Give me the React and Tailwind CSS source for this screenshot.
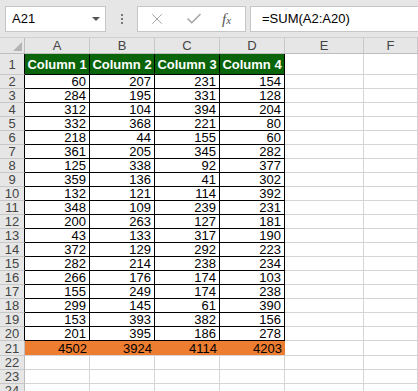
import React from 'react';
import { X, Check } from 'lucide-react';

const data = [
    [60, 207, 231, 154],
    [284, 195, 331, 128],
    [312, 104, 394, 204],
    [332, 368, 221, 80],
    [218, 44, 155, 60],
    [361, 205, 345, 282],
    [125, 338, 92, 377],
    [359, 136, 41, 302],
    [132, 121, 114, 392],
    [348, 109, 239, 231],
    [200, 263, 127, 181],
    [43, 133, 317, 190],
    [372, 129, 292, 223],
    [282, 214, 238, 234],
    [266, 176, 174, 103],
    [155, 249, 174, 238],
    [299, 145, 61, 390],
    [153, 393, 382, 156],
    [201, 395, 186, 278],
];

const totals = [4502, 3924, 4114, 4203];
const letters = ['A', 'B', 'C', 'D', 'E', 'F'];

const gridCols = 'grid grid-cols-[25px_65px_65px_65px_65px_79px_1fr]';

// row number cell on the left
const RowHead = ({ n, dark }) => (
    <div className={`bg-[#e6e6e6] border-b border-r border-b-[#c8c8c8] text-[#444] text-[13px] leading-none flex items-center justify-center ${dark ? 'border-r-black' : 'border-r-[#bdbdbd]'}`}>
        {n}
    </div>
);

const Empty = () => <div className="border-r border-b border-[#d4d4d4]" />;

const App = () => {
    return (
        <div className="w-[418px] h-[391px] overflow-hidden bg-white font-['Liberation_Sans',sans-serif] text-black">

            {/* Formula bar */}
            <div className="h-[37px] bg-[#e6e6e6] pt-[6px] pl-[5px] flex items-start">
                <div className="w-[101px] h-[26px] bg-white border border-[#c6c6c6] flex items-center justify-between pl-[6px] pr-[5px]">
                    <span className="text-[13px]">A21</span>
                    <span className="w-0 h-0 border-l-[4px] border-r-[4px] border-t-[4px] border-l-transparent border-r-transparent border-t-[#555]" />
                </div>
                <div className="w-[31px] h-[26px] flex flex-col items-center justify-center gap-[2px]">
                    <span className="w-[2px] h-[2px] bg-[#777]" />
                    <span className="w-[2px] h-[2px] bg-[#777]" />
                    <span className="w-[2px] h-[2px] bg-[#777]" />
                </div>
                <div className="w-[109px] h-[26px] bg-white border border-[#c6c6c6] flex items-center pl-[10px]">
                    <X size={18} strokeWidth={1.3} color="#a6a6a6" />
                    <Check size={18} strokeWidth={2.2} color="#a6a6a6" className="ml-[19px]" />
                    <span className="ml-[19px] font-['Liberation_Serif',serif] italic text-[15px] text-[#555] leading-none">
                        f<span className="text-[11px]">x</span>
                    </span>
                </div>
                <div className="ml-[4px] flex-1 h-[26px] bg-white border border-r-0 border-[#c6c6c6] flex items-center pl-[11px]">
                    <span className="text-[13px]">=SUM(A2:A20)</span>
                </div>
            </div>

            {/* Column headers */}
            <div className={`${gridCols} h-[17px] border-t border-[#d0d0d0]`}>
                <div className="bg-[#e6e6e6] border-r border-b border-[#bdbdbd] flex items-end justify-end pr-[2px] pb-[2px]">
                    <svg width="9" height="9" viewBox="0 0 9 9">
                        <polygon points="9,0 9,9 0,9" fill="#b4b4b4" />
                    </svg>
                </div>
                {letters.map(l => (
                    <div key={l} className="bg-[#e6e6e6] border-r border-b border-r-[#c8c8c8] border-b-[#bdbdbd] text-[#444] text-[13px] leading-none flex items-center justify-center">
                        {l}
                    </div>
                ))}
            </div>

            {/* Row 1 - headings */}
            <div className={`${gridCols} h-[21px]`}>
                <RowHead n={1} dark />
                {[1, 2, 3, 4].map(i => (
                    <div key={i} className="bg-[#0a640a] border-r border-b border-black text-white font-bold text-[13px] leading-none flex items-center justify-center">
                        Column {i}
                    </div>
                ))}
                <Empty />
                <Empty />
            </div>

            {/* Data rows */}
            {data.map((row, r) => (
                <div key={r} className={`${gridCols} h-[14px]`}>
                    <RowHead n={r + 2} dark />
                    {row.map((v, c) => (
                        <div key={c} className="border-r border-b border-black text-[13px] leading-none flex items-center justify-end pr-[3px]">
                            {v}
                        </div>
                    ))}
                    <Empty />
                    <Empty />
                </div>
            ))}

            {/* Totals */}
            <div className={`${gridCols} h-[15px]`}>
                <RowHead n={21} />
                {totals.map((v, c) => (
                    <div key={c} className="bg-[#ed7d31] border-b border-[#d4d4d4] text-[13px] leading-none flex items-center justify-end pr-[3px]">
                        {v}
                    </div>
                ))}
                <Empty />
                <Empty />
            </div>

            {[22, 23, 24].map(n => (
                <div key={n} className={`${gridCols} h-[14px]`}>
                    <RowHead n={n} />
                    <Empty />
                    <Empty />
                    <Empty />
                    <Empty />
                    <Empty />
                    <Empty />
                </div>
            ))}
        </div>
    );
};

export default App;
